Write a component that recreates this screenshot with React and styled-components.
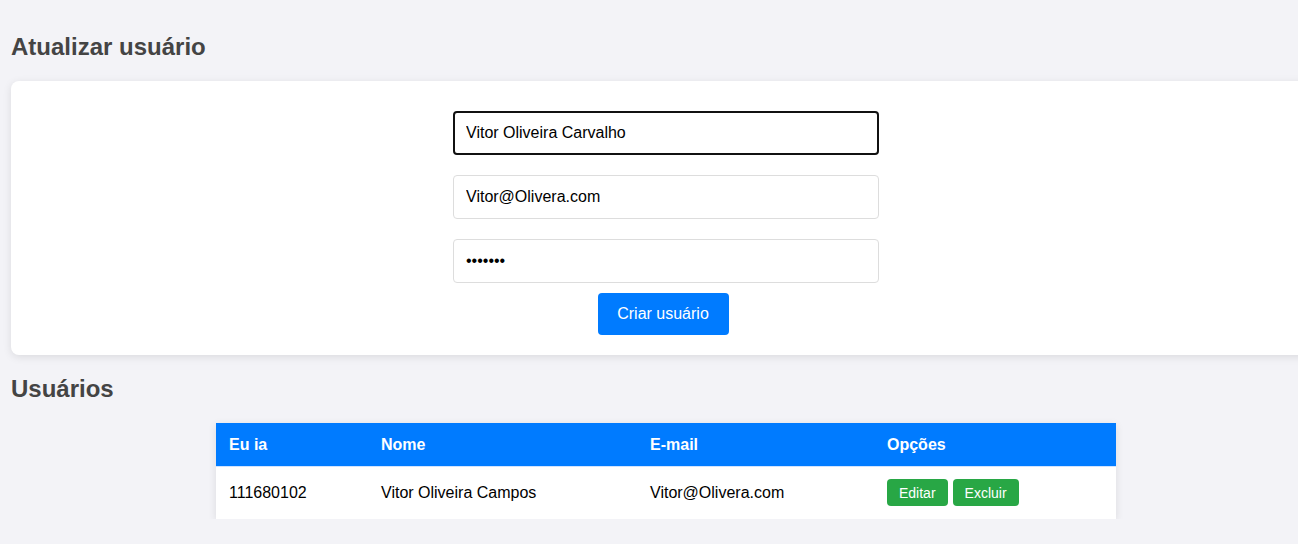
import React from 'react';
import styled, { createGlobalStyle } from 'styled-components';

const GlobalStyle = createGlobalStyle`
	html, body {
		margin: 0;
		padding: 0;
		background: #f3f3f7;
		overflow: hidden;
		font-family: "Liberation Sans", Arial, sans-serif;
	}
`;

const users = [
	{ id: '111680102', name: 'Vitor Oliveira Campos', email: 'Vitor@Olivera.com' }
];

const columns = [
	{ label: 'Eu ia', width: 152 },
	{ label: 'Nome', width: 269 },
	{ label: 'E-mail', width: 237 },
	{ label: 'Opções', width: 242 }
];

export default function App() {
	return (
		<>
			<GlobalStyle/>
			<Page>
				<Title>Atualizar usuário</Title>
				<Card>
					<Form onSubmit={e => e.preventDefault()}>
						<Input focused type='text' defaultValue='Vitor Oliveira Carvalho' readOnly/>
						<Input type='email' defaultValue='Vitor@Olivera.com' readOnly/>
						<Input type='password' defaultValue='1234567' readOnly/>
						<SubmitButton type='submit'>Criar usuário</SubmitButton>
					</Form>
				</Card>

				<Title>Usuários</Title>
				<Table>
					<thead>
						<tr>
							{columns.map(col => (
								<HeadCell key={col.label} $width={col.width}>{col.label}</HeadCell>
							))}
						</tr>
					</thead>
					<tbody>
						{users.map(user => (
							<tr key={user.id}>
								<Cell>{user.id}</Cell>
								<Cell>{user.name}</Cell>
								<Cell>{user.email}</Cell>
								<Cell>
									<Actions>
										<ActionButton>Editar</ActionButton>
										<ActionButton>Excluir</ActionButton>
									</Actions>
								</Cell>
							</tr>
						))}
					</tbody>
				</Table>
			</Page>
		</>
	);
}

const Page = styled.div`
	width: 1310px;
	margin-left: 11px;
	padding-top: 33px;
	display: flex;
	flex-direction: column;
`;

const Title = styled.h2`
	margin: 0;
	font-size: 24px;
	line-height: 28px;
	font-weight: 700;
	color: #444;
`;

const Card = styled.div`
	margin: 20px 0;
	background: #fff;
	border-radius: 8px;
	box-shadow: 0 2px 8px rgba(0, 0, 0, 0.1);
	padding: 30px 0 20px;
`;

const Form = styled.form`
	display: flex;
	flex-direction: column;
	align-items: center;
	gap: 20px;
`;

const Input = styled.input`
	box-sizing: border-box;
	width: 426px;
	height: 44px;
	font-family: "Liberation Sans", Arial, sans-serif;
	font-size: 16px;
	color: #000;
	background: #fff;
	border: ${props => props.focused ? '2px solid #111' : '1px solid #ddd'};
	padding: 0 12px 0 ${props => props.focused ? '11px' : '12px'};
	border-radius: 4px;
	outline: none;
`;

const SubmitButton = styled.button`
	margin: -10px 0 0 -6px;
	width: 131px;
	height: 42px;
	border: none;
	border-radius: 4px;
	background: #007bff;
	color: #fff;
	font-family: "Liberation Sans", Arial, sans-serif;
	font-size: 16px;
	cursor: pointer;
`;

const Table = styled.table`
	margin: 20px auto 0;
	width: 900px;
	border-collapse: collapse;
	background: #fff;
	box-shadow: 0 2px 8px rgba(0, 0, 0, 0.1);
	font-size: 16px;
	table-layout: fixed;
`;

const HeadCell = styled.th`
	width: ${props => props.$width}px;
	height: 43px;
	padding: 1px 13px 0;
	box-sizing: border-box;
	background: #007bff;
	color: #fff;
	font-weight: 700;
	text-align: left;
	border-bottom: 1px solid #cfe3ff;
`;

const Cell = styled.td`
	height: 53px;
	padding: 0 13px;
	box-sizing: border-box;
	color: #000;
	text-align: left;
`;

const Actions = styled.div`
	display: flex;
	gap: 5px;
`;

const ActionButton = styled.button`
	height: 27px;
	padding: 0 12px;
	border: none;
	border-radius: 4px;
	background: #28a745;
	color: #fff;
	font-family: "Liberation Sans", Arial, sans-serif;
	font-size: 14px;
	cursor: pointer;
`;
